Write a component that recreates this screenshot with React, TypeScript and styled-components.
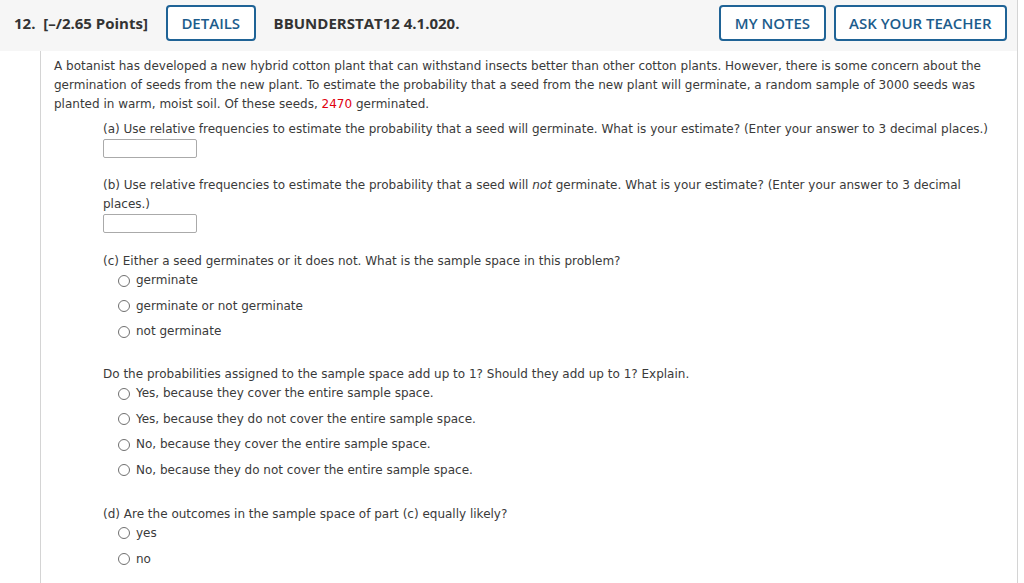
import styled, { createGlobalStyle } from 'styled-components';

const Global = createGlobalStyle`
  html, body { margin: 0; padding: 0; background: #fff; }
  body { font-family: "DejaVu Sans", Verdana, sans-serif; }
`;

const Card = styled.div`
  width: 1017px;
  border-right: 1px solid #d4d4d4;
  min-height: 583px;
`;

const Header = styled.header`
  display: flex;
  align-items: flex-start;
  height: 51px;
  background: #f6f6f6;
  padding: 5px 10px 0 14px;
  font-family: "Open Sans", sans-serif;
  box-sizing: border-box;
`;

const HeaderText = styled.span<{ grow?: boolean }>`
  font-weight: 700;
  font-size: 15px;
  line-height: 36px;
  color: #333;
  margin: 0 18px;
  flex: ${({ grow }) => (grow ? 1 : 'none')};
  &:first-child { margin-left: 0; }
`;

const HeaderButton = styled.button`
  font-family: "Open Sans", sans-serif;
  font-size: 15px;
  font-weight: 600;
  color: #1c5c8c;
  background: #fff;
  border: 2px solid #1f6396;
  border-radius: 4px;
  height: 36px;
  padding: 0 13.5px;
`;

const RightButtons = styled.div`
  display: flex;
  gap: 8px;
`;

const Body = styled.div`
  margin-left: 40px;
  border-left: 1px solid #d4d4d4;
  padding: 6px 20px 0 13px;
  min-height: 532px;
  font-size: 12px;
  line-height: 19px;
  color: #3a3a3a;
`;

const Para = styled.p`
  margin: 0;
`;

const Red = styled.span`
  color: #e0000f;
`;

const Part = styled.div<{ gap?: number }>`
  margin-left: 49px;
  margin-top: ${({ gap }) => gap ?? 0}px;
`;

const Input = styled.div`
  width: 94px;
  height: 19px;
  border: 1px solid #aaa;
  border-radius: 2px;
  box-sizing: border-box;
`;

const Options = styled.div`
  margin-left: 15px;
  display: flex;
  flex-direction: column;
  gap: 6.6px;
`;

const Option = styled.label`
  display: flex;
  align-items: center;
  gap: 6px;
`;

const Radio = styled.span`
  width: 12px;
  height: 12px;
  border: 1px solid #707070;
  border-radius: 50%;
  box-sizing: border-box;
`;

const RadioGroup = ({ items }: { items: string[] }) => (
  <Options>
    {items.map((t) => (
      <Option key={t}>
        <Radio />
        {t}
      </Option>
    ))}
  </Options>
);

export default function App() {
  return (
    <>
      <Global />
      <Card>
        <Header>
          <HeaderText>12.&nbsp; [–/2.65 Points]</HeaderText>
          <HeaderButton>DETAILS</HeaderButton>
          <HeaderText grow>BBUNDERSTAT12 4.1.020.</HeaderText>
          <RightButtons>
            <HeaderButton>MY NOTES</HeaderButton>
            <HeaderButton>ASK YOUR TEACHER</HeaderButton>
          </RightButtons>
        </Header>
        <Body>
          <Para>
            A botanist has developed a new hybrid cotton plant that can withstand insects better than other cotton plants. However, there is some concern about the germination of seeds from the new plant. To estimate the probability that a seed from the new plant will germinate, a random sample of 3000 seeds was planted in warm, moist soil. Of these seeds, <Red>2470</Red> germinated.
          </Para>
          <Part gap={6}>
            <Para>(a) Use relative frequencies to estimate the probability that a seed will germinate. What is your estimate? (Enter your answer to 3 decimal places.)</Para>
            <Input />
          </Part>
          <Part gap={18}>
            <Para>
              (b) Use relative frequencies to estimate the probability that a seed will <i>not</i> germinate. What is your estimate? (Enter your answer to 3 decimal places.)
            </Para>
            <Input />
          </Part>
          <Part gap={19}>
            <Para>(c) Either a seed germinates or it does not. What is the sample space in this problem?</Para>
            <RadioGroup items={['germinate', 'germinate or not germinate', 'not germinate']} />
          </Part>
          <Part gap={24}>
            <Para>Do the probabilities assigned to the sample space add up to 1? Should they add up to 1? Explain.</Para>
            <RadioGroup
              items={[
                'Yes, because they cover the entire sample space.',
                'Yes, because they do not cover the entire sample space.',
                'No, because they cover the entire sample space.',
                'No, because they do not cover the entire sample space.',
              ]}
            />
          </Part>
          <Part gap={25}>
            <Para>(d) Are the outcomes in the sample space of part (c) equally likely?</Para>
            <RadioGroup items={['yes', 'no']} />
          </Part>
        </Body>
      </Card>
    </>
  );
}
